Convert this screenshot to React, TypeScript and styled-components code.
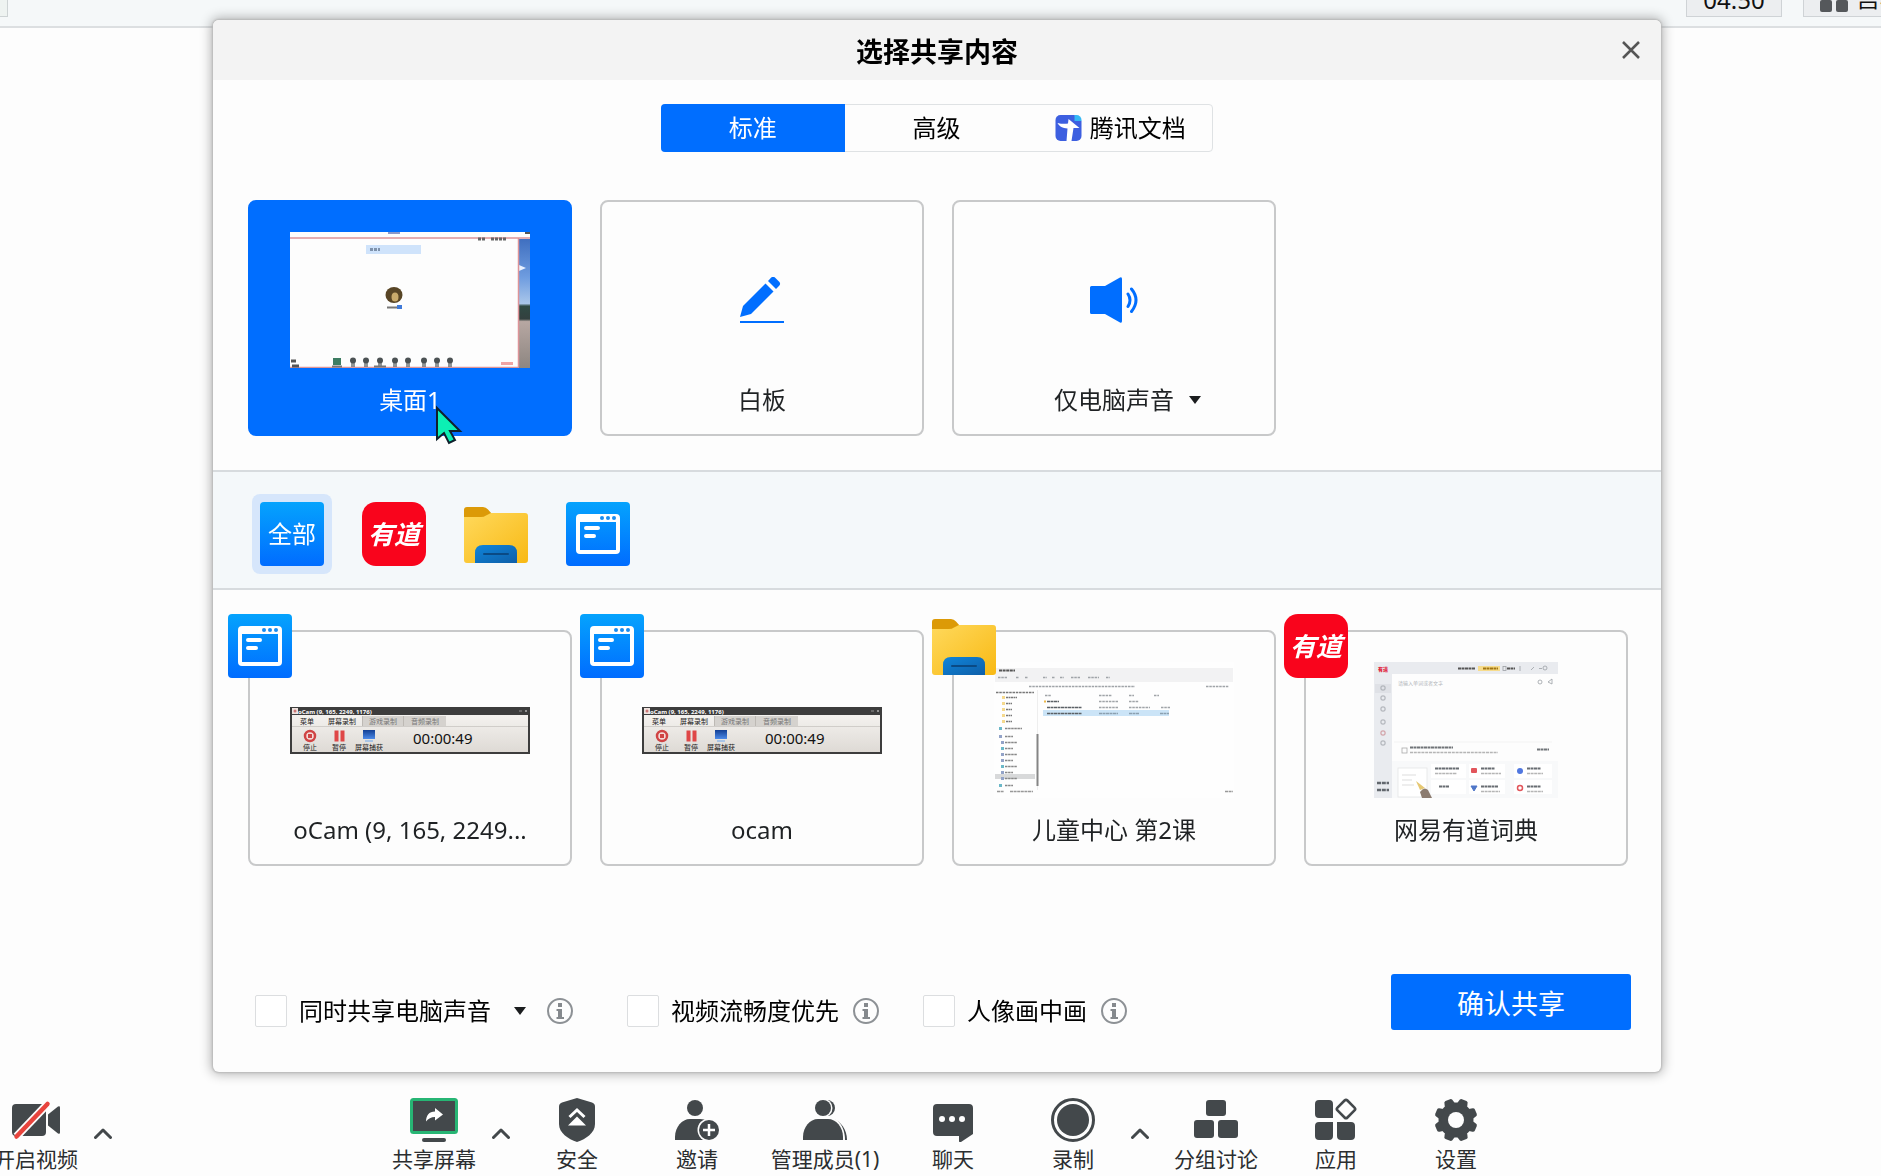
import React, { useState } from "react";
import styled, { createGlobalStyle } from "styled-components";

const BLUE = "#006eff";
const INK = "#1f2224";
const ICON = "#43484b";
const LINE = "#c8c9ca";

const GlobalStyle = createGlobalStyle`
  *, *::before, *::after { box-sizing: border-box; }
  html, body { margin: 0; height: 100%; overflow: hidden; }
  body {
    background: #fdfdfd;
    color: ${INK};
    font-family: "Noto Sans", "Noto Sans CJK SC", sans-serif;
    font-size: 24px;
    line-height: 32px;
  }
  button {
    font: inherit;
    color: inherit;
    background: none;
    border: 0;
    padding: 0;
    margin: 0;
    cursor: pointer;
  }
  svg { display: block; flex: none; }
`;

/* ---------- page frame ---------- */

const Page = styled.div`
  display: flex;
  flex-direction: column;
  height: 100vh;
  overflow: hidden;
`;

const TopBar = styled.header`
  display: flex;
  justify-content: flex-end;
  align-items: flex-end;
  height: 28px;
  padding-bottom: 9px;
  overflow: hidden;
  background: #f5f8f9;
  border-bottom: 2px solid #dcdfe1;
`;

const StatusMark = styled.span`
  height: 36px;
  width: 8px;
  margin-right: auto;
  background: #eef3f1;
  border: 1px solid #cdd3d4;
  border-left: 0;
`;

const TopChip = styled.div`
  display: flex;
  align-items: center;
  justify-content: center;
  height: 38px;
  width: 96px;
  padding-top: 3px;
  margin-right: 21px;
  background: #eceef0;
  border: 1px solid #cfd3d6;
  color: #111;
`;

const LayoutButton = styled.button`
  display: flex;
  flex: none;
  align-items: center;
  gap: 8px;
  width: 78px;
  height: 38px;
  padding-left: 16px;
  overflow: hidden;
  white-space: nowrap;
  background: #eceef0;
  border: 1px solid #cfd3d6;
  border-right: 0;
  color: #111;
`;

const Stage = styled.main`
  flex: 1;
`;

const Toolbar = styled.nav`
  display: flex;
  align-items: flex-start;
  height: 84px;
  padding-top: 6px;
  margin-left: -24px;
  color: ${ICON};
`;

const Tool = styled.button<{ $wide?: boolean }>`
  display: flex;
  flex: none;
  flex-direction: column;
  align-items: center;
  width: ${(p) => (p.$wide ? 136 : 120)}px;
  gap: 3px;
  font-size: 21px;
  line-height: 28px;
  white-space: nowrap;
  color: #2b2e30;
`;

const MoreButton = styled.button`
  display: flex;
  flex: none;
  align-items: flex-end;
  width: 28px;
  height: 44px;
  margin: 0 -1px 0 -4px;
  padding: 0 0 3px 2px;
`;

const ToolGap = styled.span`
  flex: none;
  width: 255px;
`;

/* ---------- dialog ---------- */

const Overlay = styled.div`
  position: fixed;
  inset: 0;
  padding: 20px 220px 0 213px;
  pointer-events: none;
`;

const Dialog = styled.section`
  pointer-events: auto;
  background: #fdfdfd;
  border-radius: 6px;
  box-shadow: 0 0 2px 1px #b9b9b9, 0 0 12px 2px rgba(0, 0, 0, 0.3);
`;

const DialogHeader = styled.div`
  display: grid;
  grid-template-columns: 60px 1fr 60px;
  align-items: center;
  height: 60px;
  background: #f3f3f3;
  border-radius: 6px 6px 0 0;
`;

const DialogTitle = styled.h1`
  grid-column: 2;
  margin: 0;
  padding-top: 4px;
  text-align: center;
  font-size: 27px;
  line-height: 36px;
  font-weight: 700;
  color: #000;
`;

const CloseButton = styled.button`
  display: flex;
  align-items: center;
  justify-content: center;
  width: 60px;
  height: 60px;
`;

const Tabs = styled.div`
  display: flex;
  width: 552px;
  height: 48px;
  margin: 24px auto 48px;
  border: 1px solid #dfe2e4;
  border-radius: 4px;
`;

const Tab = styled.button<{ $active?: boolean }>`
  display: flex;
  flex: 1;
  align-items: center;
  justify-content: center;
  gap: 8px;
  margin: ${(p) => (p.$active ? "-1px 0 -1px -1px" : "0")};
  border-radius: ${(p) => (p.$active ? "4px 0 0 4px" : "0")};
  background: ${(p) => (p.$active ? BLUE : "transparent")};
  color: ${(p) => (p.$active ? "#fff" : "#000")};
`;

const CardGrid = styled.div`
  display: grid;
  grid-template-columns: repeat(4, 1fr);
  gap: 28px;
  padding: 0 33px 0 35px;
`;

const CardCell = styled.div`
  position: relative;
`;

const Card = styled.button<{ $selected?: boolean }>`
  display: flex;
  flex-direction: column;
  align-items: center;
  width: 100%;
  gap: 16px;
  padding: 30px 10px 18px;
  border: 2px solid ${(p) => (p.$selected ? BLUE : LINE)};
  border-radius: 8px;
  background: ${(p) => (p.$selected ? BLUE : "transparent")};
  color: ${(p) => (p.$selected ? "#fff" : INK)};
`;

const Preview = styled.span`
  display: flex;
  align-items: center;
  justify-content: center;
  width: 240px;
  height: 136px;
`;

const CardLabel = styled.span`
  display: grid;
  grid-template-columns: 1fr auto 1fr;
  align-items: center;
  gap: 15px;
  width: 100%;
  white-space: nowrap;
`;

const CardText = styled.span`
  grid-column: 2;
`;

const Badge = styled.span`
  position: absolute;
  left: -20px;
  top: -16px;
`;

const Pointer = styled.svg`
  position: absolute;
  left: 187px;
  top: 205px;
  pointer-events: none;
`;

const AppStrip = styled.div`
  display: flex;
  gap: 22px;
  margin: 34px 0 40px;
  padding: 22px 39px 14px;
  background: #f4f8fa;
  border: solid #d7dbde;
  border-width: 2px 0;
`;

const AppFilter = styled.button<{ $active?: boolean }>`
  padding: 8px;
  border-radius: 8px;
  background: ${(p) => (p.$active ? "#d6e6fb" : "transparent")};
`;

const AppTile = styled.span<{ $kind: "all" | "youdao" | "window" }>`
  display: flex;
  align-items: center;
  justify-content: center;
  width: 64px;
  height: 64px;
  border-radius: ${(p) => (p.$kind === "youdao" ? 14 : 4)}px;
  background: ${(p) => (p.$kind === "youdao" ? "#f9041c" : "linear-gradient(#05a3fd, #006cff)")};
  color: #fff;
  font-size: ${(p) => (p.$kind === "youdao" ? 26 : 24)}px;
  font-style: ${(p) => (p.$kind === "youdao" ? "italic" : "normal")};
  font-weight: ${(p) => (p.$kind === "youdao" ? 700 : 400)};
`;

const Footer = styled.div`
  display: flex;
  justify-content: space-between;
  align-items: flex-end;
  padding: 108px 30px 42px 42px;
`;

const Options = styled.div`
  display: flex;
  gap: 44px;
`;

const Option = styled.div<{ $menu?: boolean }>`
  display: flex;
  align-items: center;
  height: 38px;
  padding-right: ${(p) => (p.$menu ? 10 : 0)}px;
  color: #000;
`;

const OptionLabel = styled.label`
  display: flex;
  align-items: center;
  gap: 12px;
  white-space: nowrap;
`;

const Checkbox = styled.input`
  appearance: none;
  width: 32px;
  height: 32px;
  margin: 0;
  background: #fff;
  border: 1px solid #dcdee0;
  border-radius: 2px;
  &:checked { background: ${BLUE}; }
`;

const OptionMenu = styled.button`
  display: flex;
  justify-content: flex-end;
  width: 42px;
  padding-right: 7px;
`;

const InfoButton = styled.button`
  margin-left: 14px;
`;

const ConfirmButton = styled.button`
  width: 240px;
  height: 56px;
  padding-top: 3px;
  border-radius: 3px;
  background: ${BLUE};
  color: #fff;
  font-size: 27px;
  line-height: 36px;
`;

/* ---------- icons ---------- */

const Arrow = () => (
  <svg width="12" height="8" viewBox="0 0 12 8"><path d="M0 0h12L6 8z" fill="#1b1d1f" /></svg>
);

const CloseIcon = () => (
  <svg width="18" height="18" viewBox="0 0 18 18"><path d="M1 1l16 16M17 1L1 17" stroke="#555" strokeWidth="2.5" /></svg>
);

const InfoIcon = () => (
  <svg width="26" height="26" viewBox="0 0 26 26">
    <circle cx="13" cy="13" r="12" fill="none" stroke="#8d9195" strokeWidth="2" />
    <path d="M11 5h4v4h-4zM9.500 11H15v8h2v2H9.500v-2H11v-6H9.500z" fill="#85898d" />
  </svg>
);

const TencentDocs = () => (
  <svg width="27" height="26" viewBox="0 0 26 26">
    <path d="M5 0h14l7 6v15a5 5 0 0 1-5 5H5a5 5 0 0 1-5-5V5a5 5 0 0 1 5-5z" fill="#3d5fe0" />
    <path d="M19 0h2a5 5 0 0 1 5 5v1h-7z" fill="#35b8f5" />
    <path d="M13 4l11 9h-6l-2 13h-5l1-12.500c-5-.5-8-2-10-5.500 4 1 8 1 10.500.5z" fill="#fff" />
  </svg>
);

const Pencil = () => (
  <svg width="44" height="46" viewBox="0 0 44 46" fill={BLUE}>
    <path d="M0 40l3-11L25.500 6.500l8 8L11 37z" />
    <path d="M28 4l3-3.200a3 3 0 0 1 4.200 0l4 4a3 3 0 0 1 0 4L36 12z" />
    <path d="M0 44h44v2H0z" />
  </svg>
);

const Speaker = () => (
  <svg width="48" height="46" viewBox="0 0 48 46">
    <path d="M1.500 9H15L30 .6Q32-.4 32 2v42q0 2.400-2 1.400L15 37H1.500Q0 37 0 35.500v-25Q0 9 1.500 9z" fill={BLUE} />
    <path d="M38 17q4 6 0 12.500M41.500 12q9 11 0 22.500" fill="none" stroke={BLUE} strokeWidth="3" strokeLinecap="round" />
  </svg>
);

const Folder = () => (
  <svg width="64" height="64" viewBox="0 0 64 64">
    <defs>
      <linearGradient id="folderFront" x1="0" y1="0" x2="1" y2="1">
        <stop offset="0" stopColor="#ffd95c" /><stop offset="1" stopColor="#f8b914" />
      </linearGradient>
      <linearGradient id="folderTray" x1="0" y1="0" x2="1" y2="1">
        <stop offset="0" stopColor="#0f85da" /><stop offset="1" stopColor="#0f5fa8" />
      </linearGradient>
    </defs>
    <path d="M0 16V8q0-3 3-3h16q3 0 5 2.500L28 12v6H0z" fill="#dc9a07" />
    <path d="M0 15h17q3 0 5-1.500L25 12q1-1 3-1h33q3 0 3 3v44q0 3-3 3H3q-3 0-3-3z" fill="url(#folderFront)" />
    <path d="M11 61V51q0-8 8-8h26q8 0 8 8v10z" fill="url(#folderTray)" />
    <path d="M20 52h24" stroke="#0a4a84" strokeWidth="2" strokeLinecap="round" />
  </svg>
);

const WindowIcon = () => (
  <svg width="44" height="40" viewBox="0 0 44 40">
    <path fillRule="evenodd" d="M4 0h36a4 4 0 0 1 4 4v32a4 4 0 0 1-4 4H4a4 4 0 0 1-4-4V4a4 4 0 0 1 4-4zM4 8v28h36V8z" fill="#fff" />
    <g fill="#188cf0"><circle cx="26" cy="4" r="2" /><circle cx="32" cy="4" r="2" /><circle cx="38" cy="4" r="2" /></g>
    <path d="M10 14h12M10 22h8" stroke="#fff" strokeWidth="4" strokeLinecap="round" />
  </svg>
);

const Chevron = () => (
  <svg width="18" height="11" viewBox="0 0 18 11"><path d="M1.500 9.500L9 2l7.500 7.500" fill="none" stroke={ICON} strokeWidth="3" strokeLinecap="round" strokeLinejoin="round" /></svg>
);

const GridIcon = () => (
  <svg width="28" height="28" viewBox="0 0 28 28" fill="#55585b">
    <rect width="12" height="12" rx="2" /><rect x="16" width="12" height="12" rx="2" />
    <rect y="16" width="12" height="12" rx="2" /><rect x="16" y="16" width="12" height="12" rx="2" />
  </svg>
);

const VideoOffIcon = () => (
  <svg width="48" height="44" viewBox="0 0 48 44">
    <rect y="6" width="34" height="32" rx="4" fill={ICON} />
    <path d="M36 16.500L46 8.500q2-1 2 1v25q0 2-2 1l-10-8z" fill={ICON} />
    <path d="M35.500 6L4.500 38.500" stroke="#fdfdfd" strokeWidth="8" />
    <path d="M35.500 6L4.500 38.500" stroke="#e8443d" strokeWidth="4.500" strokeLinecap="round" />
  </svg>
);

const ShareIcon = () => (
  <svg width="48" height="44" viewBox="0 0 48 44">
    <rect x="1.500" y="1.500" width="45" height="33" rx="2" fill={ICON} stroke="#27b574" strokeWidth="3" />
    <path d="M25 10l8 6.500-8 6v-3.500c-4 0-6.500 1.500-9 4.500 0-6 3-10 9-10z" fill="#fff" />
    <path d="M14 42h20" stroke={ICON} strokeWidth="4" strokeLinecap="round" />
  </svg>
);

const ShieldIcon = () => (
  <svg width="36" height="44" viewBox="0 0 36 44">
    <path d="M18 0l15 4.500q3 1 3 4V26c0 9-9 15-18 18C9 41 0 35 0 26V8.500q0-3 3-4z" fill={ICON} />
    <path d="M10.500 19L18 12l7.500 7" fill="none" stroke="#fff" strokeWidth="3" />
    <path d="M18 18.500l9 9H9z" fill="#fff" />
  </svg>
);

const InviteIcon = () => (
  <svg width="44" height="44" viewBox="0 0 44 44">
    <circle cx="20" cy="10" r="8" fill={ICON} />
    <path d="M0 42V39C0 29 7 21 15 21h10c6 0 10 3 12 8v13z" fill={ICON} />
    <circle cx="34" cy="32" r="11.500" fill="#fdfdfd" />
    <circle cx="34" cy="32" r="10" fill={ICON} />
    <path d="M28 32h12M34 26v12" stroke="#fff" strokeWidth="2.500" />
  </svg>
);

const MembersIcon = () => (
  <svg width="44" height="44" viewBox="0 0 44 44">
    <circle cx="24" cy="10" r="8" fill={ICON} />
    <path d="M8 42V36C8 28 18 21 24 21h6c8 2 14 11 14 21z" fill={ICON} />
    <circle cx="20" cy="10" r="9.500" fill="#fdfdfd" />
    <path d="M0 42C0 28 7 19 15 19h10c9 0 17 9 17 23z" fill="#fdfdfd" />
    <circle cx="20" cy="10" r="8" fill={ICON} />
    <path d="M0 42V39C0 29 7 21 15 21h10c8 0 15 8 15 18v3z" fill={ICON} />
  </svg>
);

const ChatIcon = () => (
  <svg width="40" height="44" viewBox="0 0 40 44">
    <path d="M4 6h32a4 4 0 0 1 4 4v26L28 44q-2 .5-2-1v-5H4a4 4 0 0 1-4-4V10a4 4 0 0 1 4-4z" fill={ICON} />
    <g fill="#fff"><circle cx="9" cy="21" r="3" /><circle cx="19" cy="21" r="3" /><circle cx="29" cy="21" r="3" /></g>
  </svg>
);

const RecordIcon = () => (
  <svg width="44" height="44" viewBox="0 0 44 44">
    <circle cx="22" cy="22" r="20.500" fill="none" stroke={ICON} strokeWidth="3" />
    <circle cx="22" cy="22" r="16" fill={ICON} />
  </svg>
);

const GroupsIcon = () => (
  <svg width="44" height="44" viewBox="0 0 44 44" fill={ICON}>
    <rect x="12" y="2" width="20" height="16" rx="3" /><rect y="22" width="20" height="18" rx="3" /><rect x="24" y="22" width="20" height="18" rx="3" />
  </svg>
);

const AppsIcon = () => (
  <svg width="42" height="44" viewBox="0 0 42 44" fill={ICON}>
    <path d="M4 2h10a4 4 0 0 1 4 4v14H4a4 4 0 0 1-4-4V6a4 4 0 0 1 4-4zM4 24h14v14a4 4 0 0 1-4 4H4a4 4 0 0 1-4-4V28a4 4 0 0 1 4-4zM22 24h14a4 4 0 0 1 4 4v10a4 4 0 0 1-4 4H26a4 4 0 0 1-4-4z" />
    <rect x="24" y="4" width="14" height="14" rx="2" transform="rotate(45 31 11)" fill="none" stroke={ICON} strokeWidth="2.600" />
  </svg>
);

const SettingsIcon = () => (
  <svg width="44" height="44" viewBox="0 0 44 44">
    <g fill={ICON}>
      <circle cx="22" cy="22" r="17.500" />
      {[22.5, 67.5, 112.5, 157.5, 202.5, 247.5, 292.5, 337.5].map((a) => (
        <path key={a} d="M15.500 7.500q1.500-1 1.800-4 .3-3 2.200-3h5q1.900 0 2.200 3 .3 3 1.800 4z" transform={`rotate(${a} 22 22)`} />
      ))}
    </g>
    <circle cx="22" cy="22" r="8" fill="#fdfdfd" />
  </svg>
);

/* ---------- window previews ---------- */

const DesktopPreview = () => (
  <svg width="240" height="136" viewBox="0 0 240 136">
    <defs>
      <linearGradient id="wallpaper" x1="0" y1="0" x2="0" y2="1">
        <stop offset="0" stopColor="#3f6fc0" /><stop offset=".3" stopColor="#6f9de0" /><stop offset=".5" stopColor="#a9c6ea" />
        <stop offset=".52" stopColor="#2f4a44" /><stop offset=".62" stopColor="#33403f" /><stop offset=".64" stopColor="#b7a7a2" />
        <stop offset="1" stopColor="#8d8681" />
      </linearGradient>
      <filter id="thumbSoft"><feGaussianBlur stdDeviation="0.7" /></filter>
    </defs>
    <rect width="240" height="136" fill="#fdfdfd" />
    <rect x="229" y="7" width="11" height="129" fill="url(#wallpaper)" />
    <path d="M229 33l7 3-7 3z" fill="#e8f1ff" />
    <g filter="url(#thumbSoft)">
      <path d="M0 6h240M228.500 6v129M0 135.500h229" stroke="#dd9499" strokeWidth="1.500" fill="none" />
      <path d="M98 1h12" stroke="#8b98c8" strokeWidth="2" />
      <path d="M188 7h7M201 7h15" stroke="#666" strokeWidth="3" strokeDasharray="3 1" />
      <path d="M235 1h5" stroke="#555" strokeWidth="2" />
      <rect x="76" y="13" width="55" height="9" fill="#cfe3fb" />
      <path d="M80 17.500h10" stroke="#7f93ac" strokeWidth="3" strokeDasharray="3 1" />
      <ellipse cx="104" cy="63" rx="8.500" ry="8" fill="#584425" /><ellipse cx="105" cy="65" rx="3.500" ry="4.500" fill="#c9aa6c" />
      <path d="M97 75.500h10" stroke="#777" strokeWidth="2" /><rect x="107" y="73" width="5" height="4" fill="#3f7ad8" />
      <path d="M1 129h5M2 134h7" stroke="#555" strokeWidth="3" />
      <rect x="43" y="126" width="8" height="7" fill="#3d7d62" />
      <g fill="#4c5153">
        {[63, 76, 90, 105, 118, 134, 147, 160].map((x) => (
          <g key={x}><circle cx={x} cy="128.500" r="3" /><rect x={x - 2} y="131" width="4" height="4" opacity=".6" /></g>
        ))}
      </g>
      <path d="M42 134.500h10M84 134.500h12" stroke="#777" strokeWidth="2" />
      <path d="M211 131.500h12" stroke="#f0a3a3" strokeWidth="3" />
    </g>
  </svg>
);

const OcamPreview = () => (
  <svg width="240" height="47" viewBox="0 0 240 47">
    <defs>
      <linearGradient id="ocamBody" x1="0" y1="0" x2="0" y2="1"><stop offset="0" stopColor="#f4f2ef" /><stop offset="1" stopColor="#dedad5" /></linearGradient>
      <linearGradient id="ocamMonitor" x1="0" y1="0" x2="0" y2="1"><stop offset="0" stopColor="#123f94" /><stop offset="1" stopColor="#4c8ae8" /></linearGradient>
    </defs>
    <rect width="240" height="47" fill="#3d3d3d" />
    <rect x="2" y="8" width="236" height="37" fill="url(#ocamBody)" />
    <rect x="72" y="9" width="84" height="10" fill="#d5d2ce" />
    <path d="M2 19.500h236" stroke="#d0cdc9" /><path d="M72.500 9v10M113.500 9v10" stroke="#bdb9b4" />
    <rect x="2" y="1" width="6" height="6" fill="#eee3df" /><circle cx="5" cy="4" r="1.500" fill="#c77" />
    <path d="M229 4h3M235 3l2 2M237 3l-2 2" stroke="#aaa" strokeWidth=".8" />
    <g fontFamily="'Noto Sans', 'Noto Sans CJK SC', sans-serif" fontSize="7" fill="#222">
      <text x="8" y="6.500" fill="#fff" fontSize="6" fontWeight="700">oCam (9, 165, 2249, 1176)</text>
      <text x="10" y="17">菜单</text><text x="38" y="17">屏幕录制</text>
      <text x="79" y="17" fill="#777">游戏录制</text><text x="121" y="17" fill="#777">音频录制</text>
      <text x="13" y="42.500">停止</text><text x="42" y="42.500">暂停</text><text x="65" y="42.500">屏幕捕获</text>
      <text x="123" y="36.500" fontSize="15" fill="#111">00:00:49</text>
    </g>
    <circle cx="20" cy="29" r="5" fill="#f3dcd9" stroke="#d04444" strokeWidth="2.500" /><rect x="18" y="27" width="4" height="4" fill="#d04444" />
    <path d="M46.500 23.500v11M52.500 23.500v11" stroke="#df4747" strokeWidth="4" />
    <rect x="73" y="23" width="12" height="9" fill="url(#ocamMonitor)" /><path d="M75 34h8" stroke="#a8c4e6" strokeWidth="2" />
  </svg>
);

const ExplorerPreview = () => (
  <svg width="240" height="136" viewBox="0 0 240 136">
    <rect width="240" height="136" fill="#fefefe" />
    <rect x="1" y="6" width="238" height="14" fill="#f2f2f3" />
    <path d="M5 8.500h16" stroke="#555" strokeWidth="2" strokeDasharray="3 .6" />
    <g stroke="#a0a4a8" strokeWidth="1.400" strokeDasharray="2.500 .8">
      <path d="M4 15.500h9M22 15.500h3M31 15.500h3M49 15.500h4M58 15.500h3M66 15.500h4M77 15.500h9M94 15.500h11M112 15.500h4" />
      <path d="M35 24.500h106M212 24.500h23" /><path d="M2 30.500h38" stroke="#777" />
      <path d="M51 33.500h6M105 33.500h13M135 33.500h5M160 33.500h5" />
      <path d="M105 39.500h19M135 39.500h10M105 45.500h19M135 45.500h21M167 45.500h9" />
    </g>
    <rect x="49" y="48" width="126" height="6" fill="#cbe4f7" />
    <g stroke="#5b6166" strokeWidth="1.600" strokeDasharray="3 .5">
      <path d="M53 39.500h12M53 45.500h35M53 51.500h35" /><path d="M105 51.500h19M135 51.500h10M166 51.500h9" stroke="#8ba0b0" />
    </g>
    <path d="M50 39.500h2" stroke="#eeb94a" strokeWidth="2" />
    {[34, 40, 46, 52, 58].map((y) => (
      <g key={y}><rect x="8" y={y} width="3" height="3" fill="#f5d98e" /><path d={`M12 ${y + 1.5}h${y === 34 ? 11 : 6}`} stroke="#777" strokeWidth="1.600" strokeDasharray="2 .5" /></g>
    ))}
    <rect x="1" y="112" width="40" height="5" fill="#d8d9da" />
    {[65, 73, 79, 85, 91, 97, 103, 109, 115, 122].map((y, i) => (
      <g key={y}><rect x={i === 0 || i === 1 || i === 9 ? 5 : 7} y={y} width="3" height="3" fill={i % 3 === 0 ? "#6cb8c8" : "#93a3c8"} /><path d={`M11 ${y + 1.5}h${i === 0 ? 17 : i % 2 ? 8 : 12}`} stroke="#888" strokeWidth="1.600" strokeDasharray="2.500 .6" /></g>
    ))}
    <path d="M43.500 28v100" stroke="#eee" /><path d="M43.500 72v52" stroke="#858585" strokeWidth="2" />
    <path d="M3 129.500h7M16 129.500h23M231 129.500h8" stroke="#999" strokeWidth="1.400" strokeDasharray="3 .6" />
  </svg>
);

const DictionaryPreview = () => (
  <svg width="184" height="136" viewBox="0 0 184 136">
    <rect width="184" height="136" fill="#fdfdfd" />
    <path d="M0 0h184v12H18v124H0z" fill="#e9ebef" />
    <rect x="18" y="99" width="166" height="37" fill="#f8f9fa" />
    <g fontFamily="'Noto Sans CJK SC', sans-serif">
      <text x="4" y="9" fontSize="5" fontWeight="900" fill="#e0213a">有道</text>
      <text x="24" y="23" fontSize="5" fill="#b3b6ba">请输入单词或者文字</text>
    </g>
    <path d="M84 6.500h17M133 6.500h8" stroke="#555" strokeWidth="2" strokeDasharray="3 .5" />
    <rect x="104" y="4" width="22" height="5" fill="#f7dc8c" /><path d="M109 6.500h15" stroke="#a17613" strokeWidth="1.800" strokeDasharray="3 .5" />
    <g fill="none" stroke="#9b9fa4" strokeWidth=".8"><rect x="129" y="4.500" width="3" height="4" /><path d="M146 4v5M157 8l3-3M165 6.500h3" /><circle cx="171" cy="6" r="2" /><circle cx="166" cy="20" r="2" /><path d="M174 20l4-3v5z" /></g>
    <rect x="1" y="22" width="16" height="9" fill="#dfe1e6" />
    <g fill="none" stroke="#8f949b" strokeWidth="1">
      {[26, 36, 47, 60, 71, 81].map((y) => <rect key={y} x="7" y={y - 2} width="4" height="4" rx="1" stroke={y === 71 ? "#cc8f95" : "#a5a9af"} />)}
    </g>
    <path d="M3 121h12M3 128h12" stroke="#62676d" strokeWidth="2.500" strokeDasharray="4 .8" />
    <path d="M20 80h158" stroke="#f3f3f3" /><rect x="28" y="86" width="5" height="5" fill="none" stroke="#aaa" strokeWidth=".8" />
    <path d="M36 85.500h43M163 87.500h12" stroke="#707478" strokeWidth="1.800" strokeDasharray="3 .5" />
    <path d="M36 90.500h88" stroke="#b5b5b5" strokeWidth="1.400" strokeDasharray="3 .8" />
    <rect x="24" y="106" width="29" height="29" fill="#fff" stroke="#e4e5e7" strokeWidth=".8" />
    <path d="M28 113h14M28 118h10M28 123h12" stroke="#ddd" /><path d="M42 119l4 9 5-2z" fill="#e6c873" /><path d="M46 130q4-6 8-2l4 8H48z" fill="#8c7c70" />
    <g fill="#fff"><rect x="57" y="102" width="35" height="14" /><rect x="95" y="102" width="36" height="14" /><rect x="140" y="102" width="38" height="14" /><rect x="57" y="118" width="35" height="14" /><rect x="95" y="118" width="36" height="14" /><rect x="140" y="118" width="38" height="14" /></g>
    <path d="M61 106.500h24M107 106.500h14M153 106.500h14M65 124.500h10M107 124.500h17M153 124.500h14" stroke="#686d72" strokeWidth="1.800" strokeDasharray="3 .5" />
    <path d="M61 111.500h22M107 111.500h20M153 111.500h16M107 129.500h19M153 129.500h16" stroke="#b5b5b5" strokeWidth="1.400" strokeDasharray="3 .6" />
    <rect x="97" y="106" width="6" height="5" rx="1" fill="#e2555b" /><circle cx="146" cy="109" r="3" fill="#5077e0" /><path d="M97 124h6l-3 5z" fill="#5077c8" stroke="#5077c8" /><circle cx="146" cy="126" r="2.500" fill="none" stroke="#e2555b" strokeWidth="1.500" />
  </svg>
);

/* ---------- composition ---------- */

type AppKind = "all" | "youdao" | "folder" | "window";

const AppIcon = ({ kind }: { kind: AppKind }) => {
  if (kind === "folder") return <Folder />;
  return (
    <AppTile $kind={kind}>
      {kind === "all" ? "全部" : kind === "youdao" ? "有道" : <WindowIcon />}
    </AppTile>
  );
};

const sources = [
  { id: "desktop", label: "桌面1", preview: <DesktopPreview /> },
  { id: "board", label: "白板", preview: <Pencil /> },
  { id: "audio", label: "仅电脑声音", preview: <Speaker />, menu: true },
];

const filters: { kind: AppKind; name: string }[] = [
  { kind: "all", name: "全部" },
  { kind: "youdao", name: "有道" },
  { kind: "folder", name: "文件夹" },
  { kind: "window", name: "窗口" },
];

const windows: { id: string; label: string; kind: AppKind; preview: React.ReactNode }[] = [
  { id: "ocam-1", label: "oCam (9, 165, 2249...", kind: "window", preview: <OcamPreview /> },
  { id: "ocam-2", label: "ocam", kind: "window", preview: <OcamPreview /> },
  { id: "explorer", label: "儿童中心 第2课", kind: "folder", preview: <ExplorerPreview /> },
  { id: "dict", label: "网易有道词典", kind: "youdao", preview: <DictionaryPreview /> },
];

const options = [
  { id: "share-audio", label: "同时共享电脑声音", menu: true },
  { id: "smooth", label: "视频流畅度优先" },
  { id: "pip", label: "人像画中画" },
];

const tools = [
  { label: "共享屏幕", icon: <ShareIcon />, more: true },
  { label: "安全", icon: <ShieldIcon /> },
  { label: "邀请", icon: <InviteIcon /> },
  { label: "管理成员(1)", icon: <MembersIcon />, wide: true },
  { label: "聊天", icon: <ChatIcon /> },
  { label: "录制", icon: <RecordIcon />, more: true },
  { label: "分组讨论", icon: <GroupsIcon /> },
  { label: "应用", icon: <AppsIcon /> },
  { label: "设置", icon: <SettingsIcon /> },
];

export default function App() {
  const [selected, setSelected] = useState("desktop");
  const [filter, setFilter] = useState<AppKind>("all");

  return (
    <Page>
      <GlobalStyle />
      <TopBar>
        <StatusMark />
        <TopChip>04:50</TopChip>
        <LayoutButton><GridIcon />宫格视图</LayoutButton>
      </TopBar>
      <Stage />
      <Toolbar>
        <Tool><VideoOffIcon />开启视频</Tool>
        <MoreButton aria-label="视频选项"><Chevron /></MoreButton>
        <ToolGap />
        {tools.map((t) => (
          <React.Fragment key={t.label}>
            <Tool $wide={t.wide}>{t.icon}{t.label}</Tool>
            {t.more && <MoreButton aria-label={`${t.label}选项`}><Chevron /></MoreButton>}
          </React.Fragment>
        ))}
      </Toolbar>

      <Overlay>
        <Dialog role="dialog" aria-labelledby="share-title">
          <DialogHeader>
            <DialogTitle id="share-title">选择共享内容</DialogTitle>
            <CloseButton aria-label="关闭"><CloseIcon /></CloseButton>
          </DialogHeader>

          <Tabs role="tablist">
            <Tab role="tab" aria-selected $active>标准</Tab>
            <Tab role="tab">高级</Tab>
            <Tab role="tab"><TencentDocs />腾讯文档</Tab>
          </Tabs>

          <CardGrid>
            {sources.map((s) => (
              <CardCell key={s.id}>
                <Card $selected={selected === s.id} onClick={() => setSelected(s.id)}>
                  <Preview>{s.preview}</Preview>
                  <CardLabel><CardText>{s.label}</CardText>{s.menu && <Arrow />}</CardLabel>
                </Card>
                {s.id === "desktop" && (
                  <Pointer width="28" height="40" viewBox="0 0 28 40">
                    <path d="M2 3v31l7-6 5 10 6-3-5-9h10z" fill="#0cf0b4" stroke="#10202c" strokeWidth="2" />
                  </Pointer>
                )}
              </CardCell>
            ))}
          </CardGrid>

          <AppStrip>
            {filters.map((f) => (
              <AppFilter key={f.kind} aria-label={f.name} $active={filter === f.kind} onClick={() => setFilter(f.kind)}>
                <AppIcon kind={f.kind} />
              </AppFilter>
            ))}
          </AppStrip>

          <CardGrid>
            {windows.map((w) => (
              <CardCell key={w.id}>
                <Card $selected={selected === w.id} onClick={() => setSelected(w.id)}>
                  <Preview>{w.preview}</Preview>
                  <CardLabel><CardText>{w.label}</CardText></CardLabel>
                </Card>
                <Badge><AppIcon kind={w.kind} /></Badge>
              </CardCell>
            ))}
          </CardGrid>

          <Footer>
            <Options>
              {options.map((o) => (
                <Option key={o.id} $menu={o.menu}>
                  <OptionLabel htmlFor={o.id}><Checkbox type="checkbox" id={o.id} />{o.label}</OptionLabel>
                  {o.menu && <OptionMenu aria-label="声音选项"><Arrow /></OptionMenu>}
                  <InfoButton aria-label="说明"><InfoIcon /></InfoButton>
                </Option>
              ))}
            </Options>
            <ConfirmButton>确认共享</ConfirmButton>
          </Footer>
        </Dialog>
      </Overlay>
    </Page>
  );
}
